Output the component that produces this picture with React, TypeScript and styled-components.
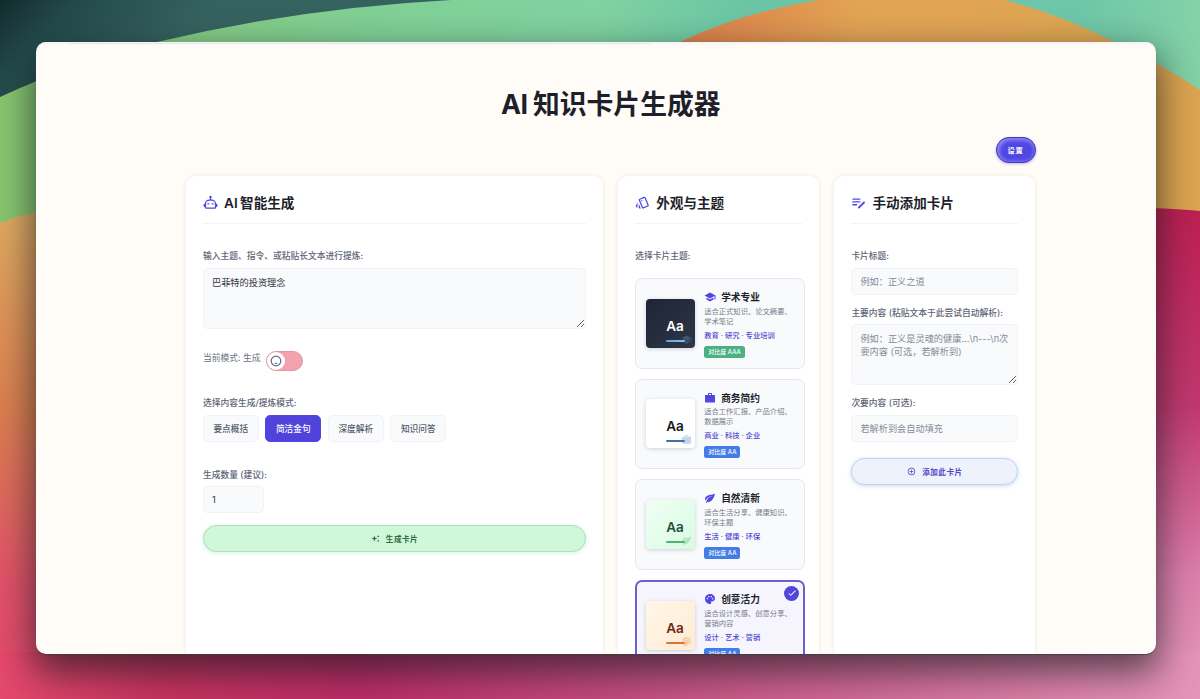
import React from 'react';
import styled, { createGlobalStyle, css } from 'styled-components';
import { MdOutlineStyle, MdSchool, MdWork, MdPalette, MdCheck, MdAddCircleOutline } from 'react-icons/md';

const Global = createGlobalStyle`
  * { box-sizing: border-box; }
  body {
    margin: 0;
    font-family: Inter, "Noto Sans CJK SC", sans-serif;
    color: #1e1f2b;
    overflow: hidden;
  }
  input, textarea, button { font-family: inherit; }
`;

const Desktop = styled.div`
  position: relative;
  height: 699px;
  padding: 42px 44px 45px 36px;
  overflow: hidden;
`;

const Wallpaper = styled.svg`
  position: absolute;
  inset: 0;
`;

const Window = styled.main`
  position: relative;
  height: 612px;
  border-radius: 10px;
  background: #fffcf7;
  box-shadow: 0 1px 1px rgba(60, 60, 60, 0.7), 0 15px 36px 3px rgba(20, 25, 30, 0.66);
`;

const Viewport = styled.div`
  height: 100%;
  border-radius: 10px;
  overflow: hidden;
  padding: 0 120.4px 0 150px;
  box-shadow: inset 0 4px 3px -2px #f3f3f6;
`;

const TopEdge = styled.div`
  height: 2px;
  width: 582px;
  margin-left: -117px;
  border-bottom: 1px solid #e6e7e8;
  border-radius: 0 0 4px 4px;
`;

const Title = styled.h1`
  margin: 41.5px 0 0;
  font-size: 26.8px;
  line-height: 36px;
  font-weight: 700;
  text-align: center;
  word-spacing: -1px;
  span { letter-spacing: -0.5px; }
`;

const Toolbar = styled.div`
  display: flex;
  justify-content: flex-end;
  margin-top: 15.5px;
`;

const SettingsButton = styled.button`
  width: 40px;
  height: 26px;
  padding: 0;
  border: 1px solid #453bbf;
  border-radius: 13px;
  background: #5046e4;
  box-shadow: inset 1px 1px 4px 1px rgba(255, 255, 255, 0.42), 0 1px 3px rgba(79, 70, 229, 0.4);
  color: #fff;
  font-size: 7.3px;
  font-weight: 700;
  letter-spacing: 0.7px;
`;

const Columns = styled.div`
  display: grid;
  grid-template-columns: 417px 201px 201px;
  gap: 15.2px;
  margin-top: 13px;
`;

const Panel = styled.section`
  height: 640px;
  padding: 17px 17px 0;
  border-radius: 10px;
  background: #fff;
  box-shadow: 0 0 5px rgba(60, 40, 20, 0.09);
`;

const PanelHeader = styled.h2`
  display: flex;
  align-items: center;
  gap: 6px;
  height: 31px;
  margin: 0;
  padding-bottom: 11px;
  border-bottom: 1px solid #f3f3f6;
  font-size: 13.6px;
  font-weight: 600;
  line-height: 20px;
  word-spacing: -1px;
  svg { color: #5046e4; width: 15px; height: 15px; flex: none; }
`;

const Label = styled.div<{ $top?: number }>`
  margin-top: ${p => p.$top ?? 10}px;
  height: 14px;
  font-size: 8.75px;
  line-height: 14px;
  font-weight: 500;
  color: #5d6474;
  white-space: nowrap;
`;

const field = css`
  display: block;
  width: 100%;
  border: 1px solid #f0f2f6;
  border-radius: 5px;
  background: #f9fafc;
  color: #31343f;
  font-size: 9.2px;
  line-height: 13px;
  outline: none;
  &::placeholder { color: #858b97; opacity: 1; }
`;

const Input = styled.input<{ $w?: number; $top?: number }>`
  ${field}
  height: 27px;
  margin-top: ${p => p.$top ?? 5}px;
  padding: 0 8px;
  ${p => p.$w && css`width: ${p.$w}px;`}
`;

const TextArea = styled.textarea<{ $top?: number }>`
  ${field}
  height: 61px;
  margin-top: ${p => p.$top ?? 5}px;
  padding: 6.5px 8px;
  resize: vertical;
`;

const ModeRow = styled.div`
  display: flex;
  align-items: center;
  gap: 6px;
  margin-top: 21px;
  height: 21px;
  font-size: 8.75px;
  color: #6c7280;
  span { margin-bottom: 6px; }
`;

const Switch = styled.div`
  width: 37px;
  height: 20px;
  border: 1px solid #dc98a4;
  border-radius: 10px;
  background: #f3a3ae;
  display: flex;
`;

const Knob = styled.div`
  width: 18px;
  height: 18px;
  border-radius: 50%;
  background: #fff;
  display: grid;
  place-items: center;
`;

const Chips = styled.div`
  display: flex;
  gap: 6.9px;
  margin-top: 5px;
`;

const Chip = styled.button<{ $active?: boolean }>`
  width: 55.6px;
  height: 27px;
  padding: 0;
  border: 1px solid ${p => (p.$active ? '#5046e4' : '#f1f2f6')};
  border-radius: 5px;
  background: ${p => (p.$active ? '#4f43dc' : '#f9fafc')};
  color: ${p => (p.$active ? '#fff' : '#555c6b')};
  font-size: 8.7px;
  font-weight: 500;
`;

const PillButton = styled.button<{ $tone: 'green' | 'blue'; $top: number }>`
  display: flex;
  align-items: center;
  justify-content: center;
  gap: 6px;
  width: 100%;
  height: 27px;
  margin-top: ${p => p.$top}px;
  border-radius: 14px;
  font-size: 7.6px;
  font-weight: 600;
  letter-spacing: 0.5px;
  ${p =>
    p.$tone === 'green'
      ? css`border: 1px solid #b0dcb9; background: #cff7d9; color: #2f6b45; box-shadow: 0 1px 4px rgba(120, 220, 150, 0.35);`
      : css`border: 1px solid #c3d2ec; background: #edf2fb; color: #5046c8; box-shadow: 0 1px 4px rgba(120, 160, 230, 0.4);`}
`;

const ThemeList = styled.div`
  display: flex;
  flex-direction: column;
  gap: 10px;
  margin-top: 15px;
`;

const ThemeCard = styled.article<{ $selected?: boolean }>`
  position: relative;
  display: flex;
  align-items: center;
  gap: 9.5px;
  height: 90.6px;
  width: 170px;
  flex: none;
  padding: 0 0 0 ${p => (p.$selected ? 8.5 : 9.5)}px;
  border: ${p => (p.$selected ? '2px solid #6a60cf' : '1.5px solid #e4e6f0')};
  border-radius: 7px;
  background: ${p => (p.$selected ? '#f6f5fd' : '#f9fafc')};
`;

const Preview = styled.div<{ $bg: string; $fg: string }>`
  position: relative;
  width: 49px;
  height: 49px;
  flex: none;
  padding: 19px 0 0 20.5px;
  border-radius: 4px;
  background: ${p => p.$bg};
  color: ${p => p.$fg};
  box-shadow: 0 1px 4px rgba(30, 30, 50, 0.18);
  font-size: 13.5px;
  line-height: 16px;
  font-weight: 600;
`;

const Underline = styled.div<{ $c: string }>`
  width: 19px;
  height: 2px;
  margin-top: 6px;
  border-radius: 1px;
  background: ${p => p.$c};
`;

const Ghost = styled.div<{ $c: string }>`
  position: absolute;
  right: 3px;
  bottom: 3px;
  height: 11px;
  color: ${p => p.$c};
  opacity: 0.32;
  svg { display: block; width: 11px; height: 11px; }
`;

const Info = styled.div`
  width: 90px;
  padding-top: 2px;
`;

const ThemeName = styled.div`
  display: flex;
  align-items: center;
  gap: 5px;
  height: 13px;
  font-size: 9.7px;
  font-weight: 600;
  svg { width: 12px; height: 12px; color: #5046e4; }
`;

const Desc = styled.div`
  margin-top: 3px;
  font-size: 7.3px;
  line-height: 10px;
  color: #777c89;
  white-space: pre;
`;

const Tags = styled.div`
  margin-top: 3px;
  height: 11px;
  font-size: 7.3px;
  line-height: 11px;
  font-weight: 500;
  color: #5046d0;
  white-space: nowrap;
`;

const Badge = styled.span<{ $c: string }>`
  display: block;
  width: fit-content;
  height: 12px;
  margin-top: 5px;
  padding: 0 4px;
  border-radius: 2.5px;
  background: ${p => p.$c};
  color: #fff;
  font-size: 6px;
  line-height: 12px;
  font-weight: 500;
`;

const CheckMark = styled.div`
  position: absolute;
  top: 4px;
  right: 4px;
  width: 15px;
  height: 15px;
  border-radius: 50%;
  background: #5046dc;
  color: #fff;
  display: grid;
  place-items: center;
  svg { width: 10px; height: 10px; }
`;

const RobotIcon = () => (
  <svg viewBox="0 0 24 24" fill="currentColor" fillRule="evenodd">
    <path d="M12 1A2 2 0 0 1 14 3C14 3.740 13.600 4.390 13 4.730V7H14A7 7 0 0 1 21 14H22A1 1 0 0 1 23 15V18A1 1 0 0 1 22 19H21V20A2 2 0 0 1 19 22H5A2 2 0 0 1 3 20V19H2A1 1 0 0 1 1 18V15A1 1 0 0 1 2 14H3A7 7 0 0 1 10 7H11V4.730C10.400 4.390 10 3.740 10 3A2 2 0 0 1 12 1ZM10 9A5 5 0 0 0 5 14V20H19V14A5 5 0 0 0 14 9Z" />
    <path d="M7 13.300h3.200v2H7zM13.800 13.300H17v2h-3.200z" />
  </svg>
);

const ListEditIcon = () => (
  <svg viewBox="0 0 24 24" fill="none" stroke="currentColor" strokeWidth="2.200" strokeLinecap="round">
    <path d="M3 6.500h11M3 11h11M3 15.500h6" />
    <path d="M12.500 20.200L20.800 12" strokeWidth="3" />
  </svg>
);

const LeafIcon = () => (
  <svg viewBox="0 0 24 24" fill="currentColor">
    <path d="M17 8C8 10 5.900 16.170 3.820 21.340L5.710 22L6.660 19.700C7.140 19.870 7.640 20 8 20C19 20 22 3 22 3C21 5 14 5.250 9 6.250S2 11.500 2 13.500S3.750 17.250 3.750 17.250C7 8 17 8 17 8Z" />
  </svg>
);

const SparkleIcon = () => (
  <svg width="9" height="9" viewBox="0 0 24 24" fill="currentColor">
    <path d="M9 4l2 6 6 2-6 2-2 6-2-6-6-2 6-2zM19 2l1 3 3 1-3 1-1 3-1-3-3-1 3-1zM19 15l1 2.500 3 1-3 1-1 3-1-3-3-1 3-1z" />
  </svg>
);

const themes = [
  { name: '学术专业', desc: '适合正式知识、论文摘要、\n学术笔记', tags: '教育 · 研究 · 专业培训', badge: '对比度 AAA', bc: '#4bb184', icon: <MdSchool />, bg: 'linear-gradient(135deg,#1e2433,#2d3748)', fg: '#fff', line: 'linear-gradient(90deg,#63a4e4,#8bbcf0)', ghost: '#63a4e4' },
  { name: '商务简约', desc: '适合工作汇报、产品介绍、\n数据展示', tags: '商业 · 科技 · 企业', badge: '对比度 AA', bc: '#447ce6', icon: <MdWork />, bg: '#fff', fg: '#17191f', line: '#3c72a8', ghost: '#4a84c0' },
  { name: '自然清新', desc: '适合生活分享、健康知识、\n环保主题', tags: '生活 · 健康 · 环保', badge: '对比度 AA', bc: '#447ce6', icon: <LeafIcon />, bg: 'linear-gradient(135deg,#f0fff4,#d9fbe2)', fg: '#26503c', line: '#4fb571', ghost: '#4fb571' },
  { name: '创意活力', desc: '适合设计灵感、创意分享、\n营销内容', tags: '设计 · 艺术 · 营销', badge: '对比度 AA', bc: '#447ce6', icon: <MdPalette />, bg: 'linear-gradient(135deg,#fff7e8,#feebd2)', fg: '#6b2c18', line: '#d87434', ghost: '#e98a48', selected: true },
];

const Background = () => (
  <Wallpaper width="1200" height="699" viewBox="0 0 1200 699" preserveAspectRatio="none">
    <defs>
      <linearGradient id="teal" gradientUnits="userSpaceOnUse" x1="0" y1="0" x2="110" y2="110"><stop stopColor="#132b2c" /><stop offset=".35" stopColor="#234a4b" /><stop offset="1" stopColor="#35625f" /></linearGradient>
      <linearGradient id="green" x1="0" y1="0" x2="1" y2="0"><stop stopColor="#88c66e" /><stop offset=".3" stopColor="#80cf95" /><stop offset=".5" stopColor="#80d2a0" /><stop offset=".62" stopColor="#6bc5a5" /><stop offset=".9" stopColor="#6ec6a8" /><stop offset="1" stopColor="#84d2a7" /></linearGradient>
      <linearGradient id="orange" gradientUnits="userSpaceOnUse" x1="680" y1="0" x2="1200" y2="0"><stop stopColor="#db7f4a" /><stop offset=".35" stopColor="#e2a454" /><stop offset="1" stopColor="#dca551" /></linearGradient>
      <linearGradient id="left" x1="0" y1="0" x2="0" y2="1"><stop stopColor="#dfab62" /><stop offset=".4" stopColor="#dc8050" /><stop offset=".78" stopColor="#e2506a" /><stop offset="1" stopColor="#e5496c" /></linearGradient>
      <linearGradient id="right" x1="0" y1="0" x2="0" y2="1"><stop stopColor="#bd1f52" /><stop offset=".4" stopColor="#c0386f" /><stop offset=".75" stopColor="#dc7fab" /><stop offset="1" stopColor="#e79abb" /></linearGradient>
      <linearGradient id="bottom" x1="0" y1="0" x2="1" y2="0"><stop stopColor="#e5496c" /><stop offset=".13" stopColor="#c9335f" /><stop offset=".3" stopColor="#bd2c67" /><stop offset=".5" stopColor="#c44a7c" /><stop offset="1" stopColor="#e594b8" /></linearGradient>
    </defs>
    <rect width="1200" height="699" fill="url(#teal)" />
    <path d="M0 97Q80 60 157 42Q300 8 451 0H1200V699H0Z" fill="url(#green)" />
    <path d="M680 42Q740 13 818 0H1004Q1060 14 1115 42Q1160 63 1200 90V300H680Z" fill="url(#orange)" />
    <path d="M0 223Q18 215 45 211V699H0Z" fill="url(#left)" />
    <path d="M1150 208Q1180 209 1200 211V699H1150Z" fill="url(#right)" />
    <rect y="652" width="1200" height="47" fill="url(#bottom)" />
  </Wallpaper>
);

export default function App() {
  return (
    <Desktop>
      <Global />
      <Background />
      <Window>
        <Viewport>
          <TopEdge />
          <Title><span>AI</span> 知识卡片生成器</Title>
          <Toolbar><SettingsButton>设置</SettingsButton></Toolbar>
          <Columns>
            <Panel>
              <PanelHeader><RobotIcon />AI 智能生成</PanelHeader>
              <Label $top={25}>输入主题、指令、或粘贴长文本进行提炼:</Label>
              <TextArea defaultValue="巴菲特的投资理念" />
              <ModeRow>
                <span>当前模式: 生成</span>
                <Switch>
                  <Knob>
                    <svg width="12" height="12" viewBox="0 0 12 12" fill="none" stroke="#5d6b86" strokeWidth="1.200"><circle cx="6" cy="6" r="4.800" /><path d="M4.500 8.300h3" strokeWidth="1" /></svg>
                  </Knob>
                </Switch>
              </ModeRow>
              <Label $top={25}>选择内容生成/提炼模式:</Label>
              <Chips>
                <Chip>要点概括</Chip>
                <Chip $active>简洁金句</Chip>
                <Chip>深度解析</Chip>
                <Chip>知识问答</Chip>
              </Chips>
              <Label $top={26}>生成数量 (建议):</Label>
              <Input $w={61} $top={4} defaultValue="1" />
              <PillButton $tone="green" $top={12}><SparkleIcon />生成卡片</PillButton>
            </Panel>
            <Panel>
              <PanelHeader><MdOutlineStyle />外观与主题</PanelHeader>
              <Label $top={25}>选择卡片主题:</Label>
              <ThemeList>
                {themes.map(t => (
                  <ThemeCard key={t.name} $selected={t.selected}>
                    <Preview $bg={t.bg} $fg={t.fg}>
                      Aa
                      <Underline $c={t.line} />
                      <Ghost $c={t.ghost}>{t.icon}</Ghost>
                    </Preview>
                    <Info>
                      <ThemeName>{t.icon}{t.name}</ThemeName>
                      <Desc>{t.desc}</Desc>
                      <Tags>{t.tags}</Tags>
                      <Badge $c={t.bc}>{t.badge}</Badge>
                    </Info>
                    {t.selected && <CheckMark><MdCheck /></CheckMark>}
                  </ThemeCard>
                ))}
              </ThemeList>
            </Panel>
            <Panel>
              <PanelHeader><ListEditIcon />手动添加卡片</PanelHeader>
              <Label $top={25}>卡片标题:</Label>
              <Input placeholder="例如：正义之道" />
              <Label $top={11}>主要内容 (粘贴文本于此尝试自动解析):</Label>
              <TextArea $top={4} placeholder={'例如：正义是灵魂的健康...\\n---\\n次要内容 (可选，若解析到)'} />
              <Label $top={11}>次要内容 (可选):</Label>
              <Input placeholder="若解析到会自动填充" />
              <PillButton $tone="blue" $top={16}><MdAddCircleOutline size={9} />添加此卡片</PillButton>
            </Panel>
          </Columns>
        </Viewport>
      </Window>
    </Desktop>
  );
}
